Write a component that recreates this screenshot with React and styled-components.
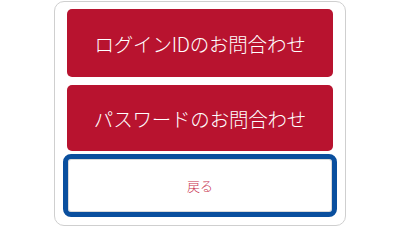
import styled, { createGlobalStyle } from 'styled-components'

const GlobalStyle = createGlobalStyle`
  body {
    margin: 0;
    background: #fff;
    font-family: "Noto Sans CJK JP", "Noto Sans", sans-serif;
  }
`

const Page = styled.div`
  width: 400px;
  height: 228px;
  padding-top: 1px;
  box-sizing: border-box;
`

const Card = styled.div`
  width: 292px;
  height: 225px;
  margin: 0 auto;
  box-sizing: border-box;
  border: 1px solid #cfcfcf;
  border-radius: 10px;
  padding: 7px 12px 0 12px;
  display: flex;
  flex-direction: column;
  gap: 8px;
`

const RedButton = styled.button`
  height: ${(p) => p.$h}px;
  border: 0;
  border-radius: 5px;
  background: #b8132f;
  color: #fff;
  font-family: inherit;
  font-size: 19.5px;
  font-weight: 300;
  letter-spacing: -0.2px;
  cursor: pointer;
`

const BackButton = styled.button`
  height: 53px;
  margin: 0 1px;
  border: 1px solid #dadada;
  border-radius: 3px;
  background: #fff;
  color: #c8324e;
  font-family: inherit;
  font-size: 13px;
  font-weight: 300;
  outline: 5px solid #0a4f9e;
  outline-offset: 0;
  cursor: pointer;
`

export default function App() {
  return (
    <Page>
      <GlobalStyle />
      <Card>
        <RedButton $h={68}>ログインIDのお問合わせ</RedButton>
        <RedButton $h={66}>パスワードのお問合わせ</RedButton>
        <BackButton>戻る</BackButton>
      </Card>
    </Page>
  )
}
